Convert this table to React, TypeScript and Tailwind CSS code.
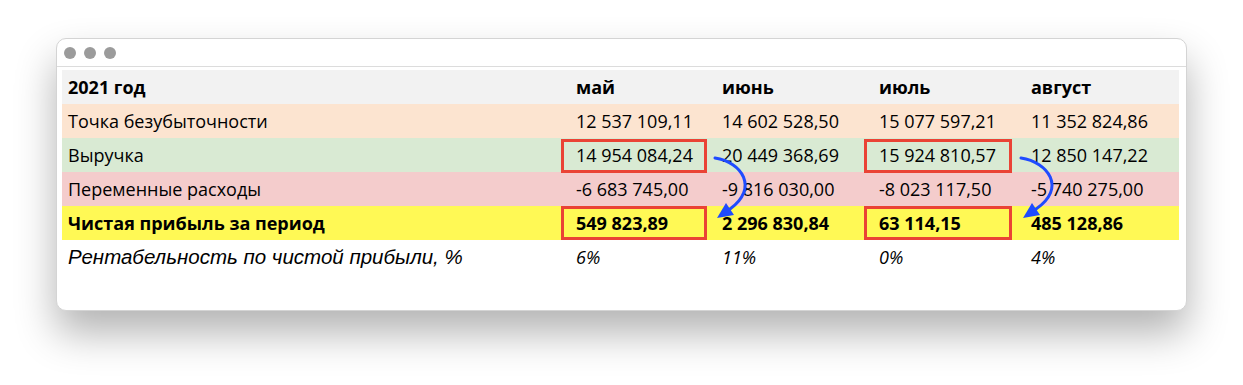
const months = ['май', 'июнь', 'июль', 'август'];

const rows = [
  {
    label: 'Точка безубыточности',
    bg: 'bg-[#fce4d0]',
    values: ['12 537 109,11', '14 602 528,50', '15 077 597,21', '11 352 824,86'],
  },
  {
    label: 'Выручка',
    bg: 'bg-[#d9ead3]',
    values: ['14 954 084,24', '20 449 368,69', '15 924 810,57', '12 850 147,22'],
  },
  {
    label: 'Переменные расходы',
    bg: 'bg-[#f4cccc]',
    values: ['-6 683 745,00', '-9 816 030,00', '-8 023 117,50', '-5 740 275,00'],
  },
];

const profit = ['549 823,89', '2 296 830,84', '63 114,15', '485 128,86'];
const margin = ['6%', '11%', '0%', '4%'];

const cols = 'grid grid-cols-[499px_146px_157px_152px_163px] h-[34px] items-center';

function Arrow({ d, head }: { d: string; head: string }) {
  return (
    <g>
      <path d={d} fill="none" stroke="#1f4bff" strokeWidth="3" strokeLinecap="round" />
      <polygon points={head} fill="#1f4bff" />
    </g>
  );
}

export default function App() {
  return (
    <div className="min-h-[385px] bg-white pt-[38px] pl-[56px] font-['Open_Sans',sans-serif] text-[18px] text-black">
      <div className="w-[1131px] h-[273px] rounded-[10px] bg-white border border-[#d4d4d4] shadow-[0_22px_40px_rgba(0,0,0,0.3)] overflow-hidden">
        {/* title bar */}
        <div className="h-[28px] border-b border-[#dcdcdc] flex items-center gap-[8px] pl-[7px]">
          <span className="w-[12px] h-[12px] rounded-full bg-[#9b9b9b]" />
          <span className="w-[12px] h-[12px] rounded-full bg-[#9b9b9b]" />
          <span className="w-[12px] h-[12px] rounded-full bg-[#9b9b9b]" />
        </div>

        <div className="pt-[3px] pl-[5px]">
          <div className="relative w-[1117px]">
            {/* header */}
            <div className={`${cols} bg-[#f2f2f2] font-bold`}>
              <div className="pl-[6px]">2021 год</div>
              {months.map((m) => (
                <div key={m} className="pl-[15px]">{m}</div>
              ))}
            </div>

            {rows.map((r) => (
              <div key={r.label} className={`${cols} ${r.bg}`}>
                <div className="pl-[6px]">{r.label}</div>
                {r.values.map((v) => (
                  <div key={v} className="pl-[15px]">{v}</div>
                ))}
              </div>
            ))}

            <div className={`${cols} bg-[#fff955] font-bold`}>
              <div className="pl-[6px]">Чистая прибыль за период</div>
              {profit.map((v) => (
                <div key={v} className="pl-[15px]">{v}</div>
              ))}
            </div>

            <div className={`${cols} italic`}>
              <div className="pl-[6px] font-['Liberation_Sans',sans-serif] text-[20.5px]">
                Рентабельность по чистой прибыли, %
              </div>
              {margin.map((v) => (
                <div key={v} className="pl-[15px]">{v}</div>
              ))}
            </div>

            {/* annotations */}
            <div className="absolute left-[499px] top-[69px] w-[146px] h-[34px] border-[3px] border-[#ea4335]" />
            <div className="absolute left-[499px] top-[136px] w-[146px] h-[34px] border-[3px] border-[#ea4335]" />
            <div className="absolute left-[802px] top-[69px] w-[148px] h-[34px] border-[3px] border-[#ea4335]" />
            <div className="absolute left-[802px] top-[136px] w-[148px] h-[34px] border-[3px] border-[#ea4335]" />

            <svg className="absolute left-0 top-0 pointer-events-none" width="1117" height="204">
              <Arrow d="M653 88 C 680 92, 697 118, 668 139" head="655,148 672,145 664,133" />
              <Arrow d="M959 88 C 986 92, 1005 118, 974 139" head="961,148 978,145 970,133" />
            </svg>
          </div>
        </div>
      </div>
    </div>
  );
}
